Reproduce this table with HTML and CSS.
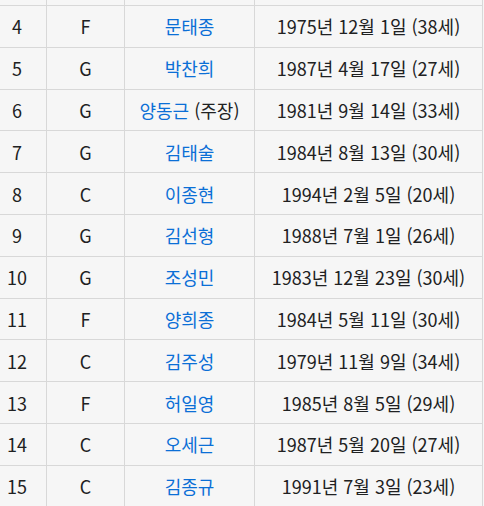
FILE: index.html
```html
<!DOCTYPE html>
<html lang="ko">
<head>
<meta charset="utf-8">
<link rel="stylesheet" href="styles.css">
</head>
<body>
<table class="roster">
  <colgroup>
    <col class="c-no"><col class="c-pos"><col class="c-name"><col class="c-birth">
  </colgroup>
  <tbody>
    <tr class="cut"><td></td><td></td><td></td><td></td></tr>
    <tr><td>4</td><td>F</td><td><a>문태종</a></td><td>1975년 12월 1일 (38세)</td></tr>
    <tr><td>5</td><td>G</td><td><a>박찬희</a></td><td>1987년 4월 17일 (27세)</td></tr>
    <tr><td>6</td><td>G</td><td><a>양동근</a> (주장)</td><td>1981년 9월 14일 (33세)</td></tr>
    <tr><td>7</td><td>G</td><td><a>김태술</a></td><td>1984년 8월 13일 (30세)</td></tr>
    <tr><td>8</td><td>C</td><td><a>이종현</a></td><td>1994년 2월 5일 (20세)</td></tr>
    <tr><td>9</td><td>G</td><td><a>김선형</a></td><td>1988년 7월 1일 (26세)</td></tr>
    <tr><td>10</td><td>G</td><td><a>조성민</a></td><td>1983년 12월 23일 (30세)</td></tr>
    <tr><td>11</td><td>F</td><td><a>양희종</a></td><td>1984년 5월 11일 (30세)</td></tr>
    <tr><td>12</td><td>C</td><td><a>김주성</a></td><td>1979년 11월 9일 (34세)</td></tr>
    <tr><td>13</td><td>F</td><td><a>허일영</a></td><td>1985년 8월 5일 (29세)</td></tr>
    <tr><td>14</td><td>C</td><td><a>오세근</a></td><td>1987년 5월 20일 (27세)</td></tr>
    <tr><td>15</td><td>C</td><td><a>김종규</a></td><td>1991년 7월 3일 (23세)</td></tr>
  </tbody>
</table>
</body>
</html>
```
FILE: styles.css
```css
html, body {
  margin: 0;
  padding: 0;
  background: #f6f6f6;
}
body {
  font-family: "Noto Sans CJK KR", "Noto Sans", sans-serif;
  font-size: 18px;
  color: #202122;
  overflow: hidden;
}
.roster {
  border-collapse: collapse;
  table-layout: fixed;
  width: 495px;
  margin-left: -13px;
  background: #f6f6f6;
}
.c-no { width: 59px; }
.c-pos { width: 78px; }
.c-name { width: 130px; }
.c-birth { width: 228px; }
.roster td {
  border: 1px solid #d8d8d8;
  text-align: center;
  padding: 0;
  height: 40.8px;
  white-space: nowrap;
}
.roster tr.cut td {
  height: 5px;
  border-top: none;
}
.roster a {
  color: #0b6fd6;
  text-decoration: none;
}
```
